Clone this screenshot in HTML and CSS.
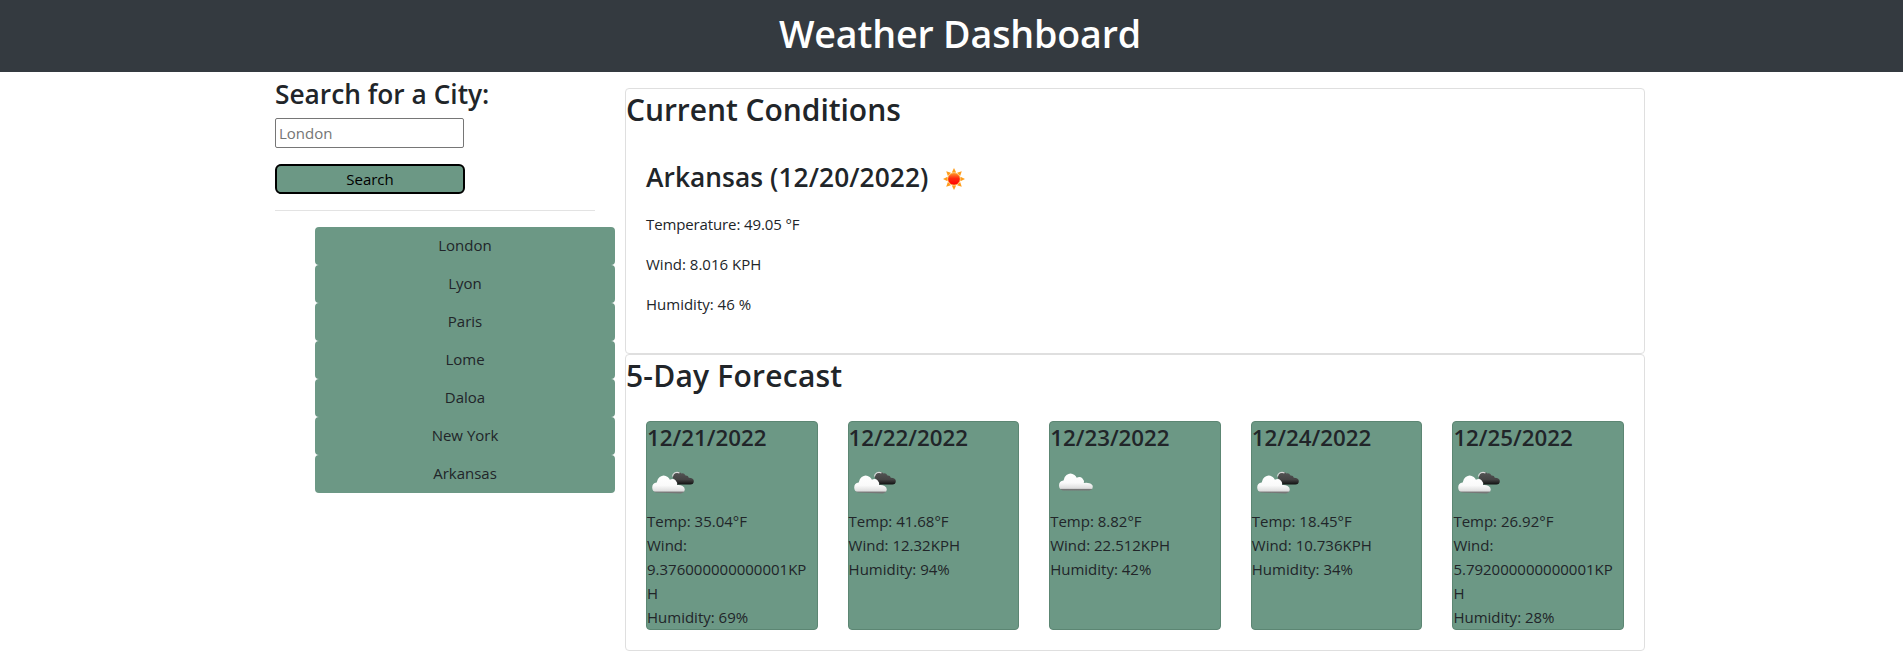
FILE: index.html
```html
<!DOCTYPE html>
<html lang="en">
<head>
<meta charset="utf-8">
<title>Weather Dashboard</title>
<link rel="stylesheet" href="styles.css">
</head>
<body>
<svg class="defs" aria-hidden="true">
  <defs>
    <linearGradient id="white" x1="0" y1="0" x2="0" y2="1">
      <stop offset="0" stop-color="#fff"/><stop offset=".55" stop-color="#fafafa"/><stop offset=".88" stop-color="#dcdcdc"/><stop offset=".9" stop-color="#777"/><stop offset="1" stop-color="#777"/>
    </linearGradient>
    <linearGradient id="dark" x1="0" y1="0" x2="0" y2="1">
      <stop offset="0" stop-color="#555"/><stop offset=".6" stop-color="#444"/><stop offset="1" stop-color="#111"/>
    </linearGradient>
    <linearGradient id="sunfill" x1="0" y1="0" x2="0" y2="1">
      <stop offset="0" stop-color="#ff9a2a"/><stop offset=".45" stop-color="#ff2a10"/><stop offset="1" stop-color="#f00"/>
    </linearGradient>
    <symbol id="broken" viewBox="0 0 50 50">
      <path d="M26 19a5 5 0 0 1 8.500-4.500q2.500-.8 4 2 2.800-.2 3.300 2.300 5 .2 5 3.200 0 3.500-3.500 3.500H30z" fill="url(#dark)"/>
      <path d="M25.500 17.500a4.600 4.600 0 0 1 7-3.500" fill="none" stroke="#ddd" stroke-width="1.200"/>
      <path d="M9 33.500q-3.800-1-3.800-5 0-4.300 4.500-5 .3-3.500 3-5.500 4-3 8 0 1.500 1 2.200 2.700 3.500-1.500 5.800.8 2 2 1.300 4.500 3.200-.4 5.500 1 2.300 1.200 2.300 3.500 0 2.500-2.300 3.200l-1.500.8z" fill="url(#white)"/>
    </symbol>
    <symbol id="cloud" viewBox="0 0 50 50">
      <path d="M12.800 31.500q-3.800-1-3.800-5 0-4.300 4.500-5 .3-3.500 3-5.500 4-3 8 0 1.500 1 2.200 2.700 3.500-1.500 5.800.8 2 2 1.300 4.500 3.200-.8 5.500.3 3.500 1 3.500 3.500 0 2.500-2 3.200l-1.500.5z" fill="url(#white)"/>
    </symbol>
    <symbol id="sun" viewBox="0 0 50 50">
      <g fill="#ff9d1c"><path id="ray" d="M25 14l2.200 4.500h-4.400z"/>
      <use href="#ray" transform="rotate(45 25 25)"/><use href="#ray" transform="rotate(90 25 25)"/><use href="#ray" transform="rotate(135 25 25)"/><use href="#ray" transform="rotate(180 25 25)"/><use href="#ray" transform="rotate(225 25 25)"/><use href="#ray" transform="rotate(270 25 25)"/><use href="#ray" transform="rotate(315 25 25)"/></g>
      <circle cx="25" cy="25" r="6.100" fill="url(#sunfill)" stroke="#ff9d1c" stroke-width=".7"/>
    </symbol>
  </defs>
</svg>
<header class="topbar"><h1>Weather Dashboard</h1></header>
<main class="container">
  <aside class="sidebar">
    <h3>Search for a City:</h3>
    <input class="city-input" type="text" placeholder="London">
    <button class="search-btn">Search</button>
    <hr>
    <ul class="history">
      <li>London</li><li>Lyon</li><li>Paris</li><li>Lome</li><li>Daloa</li><li>New York</li><li>Arkansas</li>
    </ul>
  </aside>
  <div class="results">
    <section class="card">
      <h2 class="current-title">Current Conditions</h2>
      <div class="card-body">
        <h3 class="city"><span>Arkansas (12/20/2022)</span><svg class="icon"><use href="#sun"/></svg></h3>
        <p class="temperature">Temperature: 49.05 °F</p>
        <p>Wind: 8.016 KPH</p>
        <p>Humidity: 46 %</p>
      </div>
    </section>
    <section class="card">
      <h2 class="forecast-title">5-Day Forecast</h2>
      <div class="days">
        <div class="day"><h4>12/21/2022</h4><svg class="icon"><use href="#broken"/></svg><div>Temp: 35.04°F</div><div>Wind: 9.376000000000001KPH</div><div>Humidity: 69%</div></div>
        <div class="day"><h4>12/22/2022</h4><svg class="icon"><use href="#broken"/></svg><div>Temp: 41.68°F</div><div>Wind: 12.32KPH</div><div>Humidity: 94%</div></div>
        <div class="day"><h4>12/23/2022</h4><svg class="icon"><use href="#cloud"/></svg><div>Temp: 8.82°F</div><div>Wind: 22.512KPH</div><div>Humidity: 42%</div></div>
        <div class="day"><h4>12/24/2022</h4><svg class="icon"><use href="#broken"/></svg><div>Temp: 18.45°F</div><div>Wind: 10.736KPH</div><div>Humidity: 34%</div></div>
        <div class="day"><h4>12/25/2022</h4><svg class="icon"><use href="#broken"/></svg><div>Temp: 26.92°F</div><div>Wind: 5.792000000000001KPH</div><div>Humidity: 28%</div></div>
      </div>
    </section>
  </div>
</main>
</body>
</html>
```
FILE: styles.css
```css
* { box-sizing: border-box; }
body { margin: 0; background: #fff; color: #212529; font: 400 15px/24px "Open Sans", "Noto Sans", sans-serif; }
h1, h2, h3, h4, p, ul { margin: 0; padding: 0; }
h1, h2, h3, h4 { font-weight: 600; white-space: nowrap; }
.defs { position: absolute; width: 0; height: 0; }
.topbar { height: 72px; padding-top: 10px; padding-left: 17px; background: #343a40; color: #fff; text-align: center; }
h1 { font-size: 37.6px; line-height: 48px; letter-spacing: -.15px; }
h2 { padding-top: 2px; font-size: 30px; line-height: 38px; margin-bottom: 6px; }
h3 { font-size: 26.3px; line-height: 34px; }
h4 { padding-top: 1px; font-size: 22.3px; line-height: 29px; margin-bottom: 7px; }
.current-title { letter-spacing: -.05px; }
.forecast-title { letter-spacing: .22px; }
.container { display: flex; gap: 30px; width: 1370px; margin-left: 275px; }
.sidebar { width: 320px; padding-top: 5px; }
.sidebar h3 { margin-bottom: 7px; }
.city-input { display: block; width: 189px; height: 30px; padding: 1px 3px; border: 1px solid #767676; border-radius: 2px; font: inherit; background: #fff; }
.city-input::placeholder { color: #757575; }
.search-btn { display: block; width: 190px; height: 30px; margin-top: 16px; padding: 0; border: 2px solid #000; border-radius: 6px; background: #6c9885; color: #000; font: inherit; }
hr { height: 1px; margin: 16px 0; border: 0; background: #e3e3e3; }
.history { width: 300px; margin-left: 40px; list-style: none; }
.history li { height: 38px; padding: 6px 7px; border-radius: 4px; background: #6c9885; text-align: center; }
.results { width: 1020px; padding-top: 16px; }
.card { border: 1px solid #dfdfdf; border-radius: 4px; }
.card-body { height: 218px; padding: 20px; }
.city { display: flex; align-items: center; height: 50px; margin: -1px 0 8px; letter-spacing: .07px; }
.city span { padding-bottom: 4px; }
.icon { display: block; width: 50px; height: 50px; flex: none; }
.city .icon { margin-left: 1px; }
.card-body p { margin-bottom: 16px; }
.temperature { letter-spacing: -.12px; }
.days { display: flex; gap: 30px; padding: 20px; }
.day { flex: 1 1 0; min-width: 0; height: 209px; border: 1px solid #5c8673; border-radius: 4px; background: #6c9885; overflow-wrap: break-word; }
```
